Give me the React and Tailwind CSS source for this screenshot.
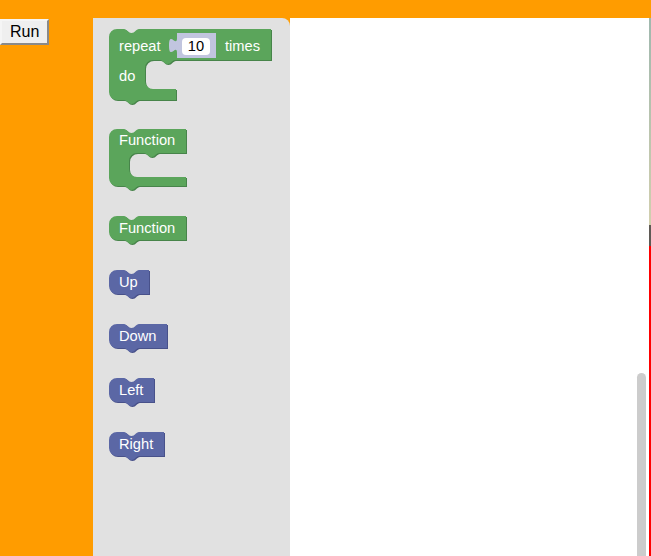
const GREEN = "#5ba55b";
const GREEN_DARK = "#47844a";
const BLUE = "#5b67a5";
const BLUE_DARK = "#48518a";

function simplePath(w, h) {
  return `M0,8 A8,8 0 0 1 8,0 H15 C18,0 19,4 22.5,4 C26,4 27,0 30,0 H${w} V${h} H30 C27,${h} 26,${h + 4} 22.5,${h + 4} C19,${h + 4} 18,${h} 15,${h} H8 A8,8 0 0 1 0,${h - 8} Z`;
}

function cPath(w, T, S, I, B, bw) {
  const y2 = T + I;
  const y3 = T + I + B;
  return `M0,8 A8,8 0 0 1 8,0 H15 C18,0 19,4 22.5,4 C26,4 27,0 30,0 H${w} V${T} H${S + 30} C${S + 27},${T} ${S + 26},${T + 4} ${S + 22.5},${T + 4} C${S + 19},${T + 4} ${S + 18},${T} ${S + 15},${T} H${S + 8} A8,8 0 0 0 ${S},${T + 8} V${y2 - 8} A8,8 0 0 0 ${S + 8},${y2} H${bw} V${y3} H30 C27,${y3} 26,${y3 + 4} 22.5,${y3 + 4} C19,${y3 + 4} 18,${y3} 15,${y3} H8 A8,8 0 0 1 0,${y3 - 8} Z`;
}

function Shape({ d, fill, dark }) {
  return (
    <>
      <path d={d} fill={dark} transform="translate(1,1)" />
      <path d={d} fill={fill} />
    </>
  );
}

function Label({ x, y, children, color = "#fff" }) {
  return (
    <text x={x} y={y} fill={color} fontSize="14.67">
      {children}
    </text>
  );
}

function SimpleBlock({ w, label, color, dark, className }) {
  return (
    <svg width={w + 2} height={30} className={className}>
      <Shape d={simplePath(w, 24)} fill={color} dark={dark} />
      <Label x={10} y={17}>{label}</Label>
    </svg>
  );
}

function RepeatBlock() {
  return (
    <svg width={164} height={77} className="ml-[16px] mt-[11px] overflow-visible">
      <Shape d={cPath(162, 31, 36, 29, 11, 67)} fill={GREEN} dark={GREEN_DARK} />
      <Label x={10} y={22}>repeat</Label>
      <path
        d="M68,4 V9 c0,10 -8,-8 -8,7.5 s8,-2.5 8,7.5 V29 H107 V4 Z"
        fill="#c1c5df"
      />
      <rect x={73} y={9} width={28} height={17} rx={4} fill="#fff" />
      <text x={87} y={22} fill="#000" fontSize="14.67" textAnchor="middle">
        10
      </text>
      <Label x={116} y={22}>times</Label>
      <Label x={10} y={52}>do</Label>
    </svg>
  );
}

function FunctionC() {
  return (
    <svg width={79} height={64} className="ml-[16px] mt-[23px]">
      <Shape d={cPath(77, 24, 20, 24, 9, 77)} fill={GREEN} dark={GREEN_DARK} />
      <Label x={10} y={16}>Function</Label>
    </svg>
  );
}

export default function App() {
  return (
    <div className="h-[556px] w-[651px] bg-[#ff9c00] flex flex-col overflow-hidden font-['Liberation_Sans',Arial,sans-serif]">
      <div className="h-[18px] shrink-0" />
      <div className="flex flex-1 min-h-0">
        <div className="w-[93px] shrink-0 pt-px">
          <button className="h-[26px] px-[8px] text-[16px] leading-[18px] text-black bg-[#efefef] border-2 border-t-[#f5f5f5] border-l-[#f5f5f5] border-r-[#8a8a8a] border-b-[#8a8a8a]">
            Run
          </button>
        </div>
        <div className="w-[197px] shrink-0 bg-[#e1e1e1] rounded-tr-[8px] flex flex-col items-start">
          <RepeatBlock />
          <FunctionC />
          <SimpleBlock w={77} label="Function" color={GREEN} dark={GREEN_DARK} className="ml-[16px] mt-[23px]" />
          <SimpleBlock w={40} label="Up" color={BLUE} dark={BLUE_DARK} className="ml-[16px] mt-[24px]" />
          <SimpleBlock w={58} label="Down" color={BLUE} dark={BLUE_DARK} className="ml-[16px] mt-[24px]" />
          <SimpleBlock w={45} label="Left" color={BLUE} dark={BLUE_DARK} className="ml-[16px] mt-[24px]" />
          <SimpleBlock w={55} label="Right" color={BLUE} dark={BLUE_DARK} className="ml-[16px] mt-[24px]" />
        </div>
        <div className="flex-1 bg-white relative">
          <div className="absolute right-[3px] top-[355px] bottom-0 w-[9px] bg-[#cccccc] rounded-t-[5px]" />
        </div>
        <div className="w-[2px] shrink-0 flex flex-col">
          <div className="h-[207px] bg-gradient-to-b from-[#9fb8ae] to-[#d2cfae]" />
          <div className="h-[21px] bg-[#5f5a55]" />
          <div className="flex-1 bg-[#ff0000]" />
        </div>
      </div>
    </div>
  );
}
